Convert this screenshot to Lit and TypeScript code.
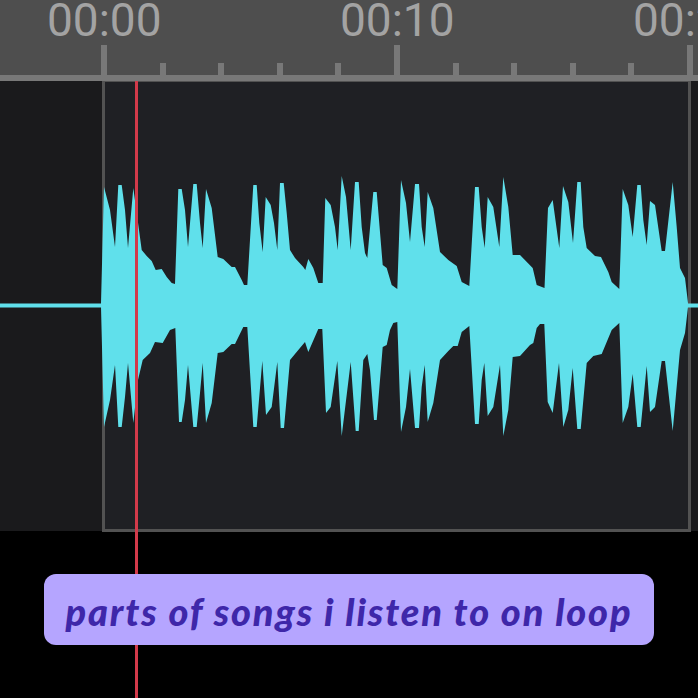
import { LitElement, html, css, svg } from "lit";
import { customElement } from "lit/decorators.js";

const TOP = "101,303 104,187 110,210 115,247 118.3,185 121.7,185 125,210 128,248 133.3,188 136.7,213 141.7,250 146.7,256 151.7,261 155.7,270 161.7,269 166.7,277 171.7,283 175,284 178.3,189 181.7,189 185,210 188,247 193.3,184 196.7,184 200,223 202.7,248 206,189 211.7,208 217.7,257 223.3,259 231.7,267 235,267 241.7,280 244,285 247.3,285 253.3,185 256.7,185 259.3,223 262.7,252 265.7,197 270.7,205 274,223 277.3,250 280,183 283.7,183 286.7,213 290,250 295,258 303.3,267 305.3,270 308.3,259 313.3,268 318.3,283 322.7,283 325.3,198 330.7,205 335,227 337.7,250 341.7,176 346,197 350.7,250 355,182 358.7,182 361.7,227 365,253 367.3,258 373.3,192 376.7,192 382.7,265 386.7,268 391.7,285 397.3,289 401,180 406,203 410,242 415,184 419,184 421.7,227 424.7,247 427.7,192 433.3,208 440,252 448.3,260 456.7,266 461.7,282 469.3,286 475,187 478.7,187 481.7,227 484.7,248 487.7,197 493.3,207 499.3,247 503.3,177 508.3,207 512.7,255 520,255 532.7,268 536.7,285 544.5,288 548,208 552.7,200 559.3,248 563,186 568.3,202 573,243 577.3,182 580.7,182 583.3,227 586.7,248 595,256 601,257 608.3,272 611.7,282 619.3,289 622.7,189 628.3,205 632.7,237 637.3,185 640.7,185 643.3,220 646.7,245 650,201 655,205 661.7,251 665,251 672.7,182 676.7,227 680,268 685,278 688,303";

const BOTTOM = "688,307 685,333 680,350 672.7,431 665,361 661.7,361 655,407 650,412 646.7,366 640.7,427 637.3,427 632.7,374 628.3,407 622.7,423 619.3,323 611.7,330 606.7,342 601.7,354 593.3,356 586.7,363 580.7,429 577.3,429 572.7,368 568.3,410 563.3,427 559,363 552.7,413 547.7,402 544.3,324 540,324 536.7,328 533.3,343 530,345 520,356 512.7,357 508.3,410 503.3,436 500,365 493.3,407 487.7,416 484.3,363 481.7,380 478.7,424 475,424 469.3,326 461.7,332 457.7,346 453.3,346 448.3,351 440,360 433.3,403 427.7,422 424.7,365 421.7,387 419,428 415,428 410,369 406,407 401,432 397.3,322 393.3,323 390,330 386.7,345 382.7,347 376.7,420 374,420 370,370 367.3,354 363.3,360 358.7,431 355.7,431 350.7,362 341.7,436 337.3,361 330.7,407 326,413 322.3,329 318.3,329 308.3,352 305,342 298.3,350 290,360 284,428 280.7,428 277.3,362 271.7,407 266,415 262.3,361 256.7,427 253.3,427 247.3,327 243.3,327 235,344 231.7,344 223.3,352 217.7,353 211.7,403 206,423 202.7,363 200,393 196.7,427 193.3,427 188,365 185,400 181.7,422 179,422 175.3,328 170,330 162.7,343 155,342 150,353 142.7,360 138,380 133.3,423 128,363 125,397 121.7,427 118.3,427 115,365 110,400 104,427 101,307";

const LABELS = ["00:00", "00:10", "00:20"];
const TICKS = Array.from({ length: 11 }, (_, i) => i % 5 === 0);

@customElement("app-root")
export class AppRoot extends LitElement {
  static styles = css`
    :host {
      display: block;
      position: relative;
      width: 698px;
      height: 698px;
      overflow: hidden;
      background: #000;
      font-family: Roboto, "Liberation Sans", sans-serif;
    }
    .ruler {
      height: 75px;
      background: #4e4e4e;
      display: flex;
      flex-direction: column;
      justify-content: space-between;
    }
    .labels {
      display: flex;
      padding-left: 47px;
      height: 40px;
      white-space: nowrap;
    }
    .time {
      flex: none;
      width: 293px;
      font-size: 46px;
      line-height: 40px;
      color: #a3a3a3;
    }
    .ticks {
      display: flex;
      align-items: flex-end;
      height: 30px;
      padding-left: 101px;
    }
    .cell {
      flex: none;
      width: 58.6px;
    }
    .tick {
      width: 6px;
      height: 12px;
      background: #787878;
    }
    .tick.major {
      height: 30px;
    }
    .axis {
      height: 6px;
      background: #787878;
    }
    .track {
      position: relative;
      height: 450px;
      background: #1a1a1c;
      display: flex;
    }
    .selection {
      flex: none;
      box-sizing: border-box;
      margin-left: 102px;
      width: 589px;
      height: 451px;
      background: #1f2024;
      border: solid #525252;
      border-width: 1px 3px 3px 3px;
    }
    .wave {
      position: absolute;
      left: 0;
      top: 0;
      width: 698px;
      height: 450px;
    }
    .wave polygon,
    .wave rect {
      fill: #60e0eb;
    }
    .playhead {
      position: absolute;
      left: 135px;
      top: 81px;
      bottom: 0;
      width: 3px;
      background: #d23a4a;
    }
    .footer {
      position: relative;
      display: flex;
      padding: 43px 0 0 44px;
    }
    .caption {
      box-sizing: border-box;
      width: 610px;
      height: 71px;
      border-radius: 12px;
      background: #b5a5ff;
      color: #3e27a9;
      font-family: Lato, "Noto Sans", sans-serif;
      font-style: italic;
      font-weight: 900;
      font-size: 38px;
      letter-spacing: 1.85px;
      line-height: 75px;
      text-align: center;
      white-space: nowrap;
    }
  `;

  render() {
    return html`
      <div class="ruler">
        <div class="labels">
          ${LABELS.map((t) => html`<div class="time">${t}</div>`)}
        </div>
        <div class="ticks">
          ${TICKS.map(
            (major) => html`<div class="cell">
              <div class="tick ${major ? "major" : ""}"></div>
            </div>`
          )}
        </div>
      </div>
      <div class="axis"></div>
      <div class="track">
        <div class="selection"></div>
        <svg class="wave" viewBox="0 81 698 450">
          ${svg`<rect x="0" y="303.5" width="104" height="4"></rect>
          <rect x="686" y="303.5" width="12" height="4"></rect>
          <polygon points="${TOP} ${BOTTOM}"></polygon>`}
        </svg>
      </div>
      <div class="playhead"></div>
      <div class="footer">
        <div class="caption">parts of songs i listen to on loop</div>
      </div>
    `;
  }
}
